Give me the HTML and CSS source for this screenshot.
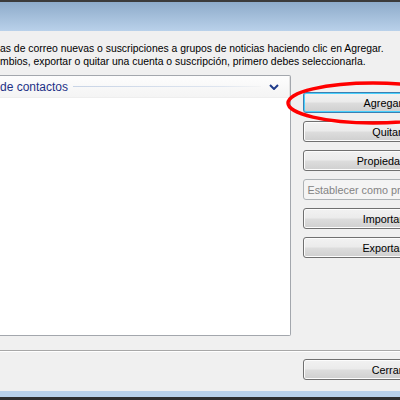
FILE: index.html
```html
<!DOCTYPE html>
<html lang="es">
<head>
<meta charset="utf-8">
<link rel="stylesheet" href="styles.css">
</head>
<body>
<div class="window">
  <div class="frame-top"></div>
  <div class="titlebar"></div>
  <div class="client">
    <p class="intro">as de correo nuevas o suscripciones a grupos de noticias haciendo clic en Agregar.<br>mbios, exportar o quitar una cuenta o suscripción, primero debes seleccionarla.</p>
    <div class="main">
      <div class="listbox">
        <div class="group-header">
          <span class="group-title">de contactos</span>
          <span class="group-line"></span>
          <svg class="chevron" width="10" height="6" viewBox="0 0 10 6"><polyline points="1,1 5,5 9,1" fill="none" stroke="#1e3a8a" stroke-width="2"/></svg>
        </div>
        <div class="list-body"></div>
      </div>
      <div class="buttons">
        <button class="btn focus">Agregar...</button>
        <button class="btn">Quitar</button>
        <button class="btn">Propiedades</button>
        <button class="btn disabled">Establecer como predeterminado</button>
        <button class="btn">Importar...</button>
        <button class="btn">Exportar...</button>
      </div>
    </div>
    <div class="separator"></div>
    <div class="footer">
      <button class="btn">Cerrar</button>
    </div>
  </div>
  <div class="frame-bottom"></div>
  <svg class="annotation" width="180" height="50" viewBox="0 0 180 50"><ellipse cx="88" cy="23" rx="85" ry="20" fill="none" stroke="#ff0000" stroke-width="3.5"/></svg>
</div>
</body>
</html>
```

FILE: styles.css
```css
* { box-sizing: border-box; }
html, body { margin: 0; padding: 0; }
body {
  width: 400px;
  height: 400px;
  overflow: hidden;
  background: #f0f0f0;
  font-family: "Liberation Sans", Arial, sans-serif;
  font-size: 10.4px;
  color: #000;
}
.window {
  position: relative;
  width: 400px;
  height: 400px;
  display: flex;
  flex-direction: column;
  overflow: hidden;
}
.frame-top { height: 2px; background: #3b3b3b; flex-shrink: 0; }
.titlebar {
  height: 29px;
  flex-shrink: 0;
  background: linear-gradient(#8eabca, #b9d1ea);
}
.client {
  flex: 1;
  display: flex;
  flex-direction: column;
  padding-top: 11px;
}
.intro {
  margin: 0;
  line-height: 13px;
  white-space: nowrap;
}
.main {
  margin-top: 7px;
  height: 261px;
  display: flex;
  align-items: flex-start;
}
.listbox {
  width: 291px;
  flex-shrink: 0;
  height: 261px;
  border: 1px solid #a3a7ad;
  border-left: none;
  border-radius: 0 2px 2px 0;
  background: #fff;
  display: flex;
  flex-direction: column;
}
.group-header {
  height: 22px;
  display: flex;
  align-items: center;
  padding-right: 10px;
  background: linear-gradient(#fdfdfd, #f4f4f4);
  border-bottom: 1px solid #eeeeee;
  border-right: 1px solid #e3e3e3;
}
.group-title {
  color: #1e3287;
  font-size: 12px;
  white-space: nowrap;
  padding-right: 5px;
}
.group-line {
  flex: 1;
  height: 1px;
  background: linear-gradient(to right, #c8d4e6, #dfe6f0 80%, #f4f4f4);
  margin-right: 8px;
}
.chevron { display: block; }
.list-body { flex: 1; }
.buttons {
  margin-left: 12px;
  margin-top: 17px;
  display: flex;
  flex-direction: column;
  gap: 8px;
  width: 168px;
  flex-shrink: 0;
}
.btn {
  width: 168px;
  height: 21px;
  flex-shrink: 0;
  padding: 0;
  font-family: "Liberation Sans", Arial, sans-serif;
  font-size: 10.8px;
  color: #000;
  border: 1px solid #707070;
  border-radius: 3px;
  background: linear-gradient(#f2f2f2 0%, #ebebeb 48%, #dddddd 52%, #cfcfcf 100%);
  box-shadow: inset 0 0 0 1px #fcfcfc;
  white-space: nowrap;
  overflow: hidden;
  text-align: center;
}
.btn.focus {
  border-color: #3c7fb1;
  box-shadow: inset 0 0 0 1px #48d0fd;
}
.btn.disabled {
  border-color: #adb2b5;
  background: #f4f4f4;
  box-shadow: none;
  color: #838383;
}
.separator {
  margin-top: 14px;
  height: 2px;
  border-top: 1px solid #a8a8a8;
  border-bottom: 1px solid #ffffff;
}
.footer {
  margin-top: 7px;
  display: flex;
  padding-left: 303px;
}
.frame-bottom {
  height: 9px;
  flex-shrink: 0;
  background: #b9d1ea;
  border-bottom: 3px solid #2f2f2f;
}
.annotation {
  position: absolute;
  left: 285px;
  top: 80px;
}
```
